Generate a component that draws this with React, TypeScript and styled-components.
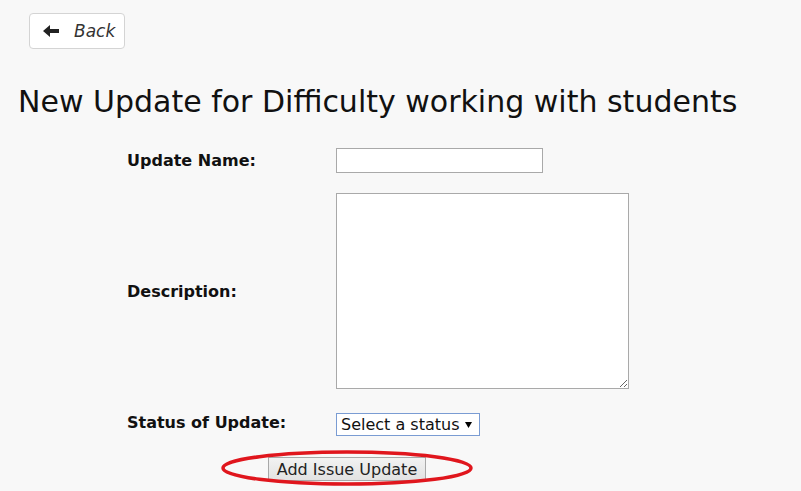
import React from 'react';
import styled, { createGlobalStyle } from 'styled-components';

const GlobalStyle = createGlobalStyle`
  html, body {
    margin: 0;
    padding: 0;
    background: #f8f8f8;
  }
  body {
    font-family: "DejaVu Sans", Verdana, sans-serif;
    color: #111;
  }
`;

const Page = styled.div`
  width: 801px;
  height: 491px;
  overflow: hidden;
  padding: 13px 0 0 0;
  box-sizing: border-box;
`;

const BackButton = styled.button`
  display: flex;
  align-items: center;
  gap: 15px;
  margin-left: 29px;
  width: 96px;
  height: 36px;
  padding: 0 0 0 13px;
  box-sizing: border-box;
  background: #fff;
  border: 1px solid #d4d4d4;
  border-radius: 4px;
  font-family: "DejaVu Sans", Verdana, sans-serif;
  font-style: italic;
  font-size: 17px;
  color: #333;
`;

const Title = styled.h1`
  margin: 36px 0 0 18px;
  font-size: 30px;
  font-weight: normal;
  line-height: 34px;
  color: #111;
`;

const Form = styled.form`
  display: grid;
  grid-template-columns: 209px auto;
  margin: 29px 0 0 127px;
  row-gap: 20px;
  align-items: center;
  justify-items: start;
`;

const Label = styled.label`
  font-weight: bold;
  font-size: 16px;
  color: #111;
`;

const TextInput = styled.input`
  width: 207px;
  height: 25px;
  box-sizing: border-box;
  border: 1px solid #a9a9a9;
  background: #fff;
  margin: 0;
`;

const TextArea = styled.textarea`
  width: 293px;
  height: 196px;
  box-sizing: border-box;
  border: 1px solid #a9a9a9;
  background: #fff;
  margin: 0;
  resize: both;
`;

const Select = styled.select`
  height: 23px;
  width: 144px;
  box-sizing: border-box;
  border: 1px solid #7a9cd3;
  background: #fff;
  font-family: "DejaVu Sans", Verdana, sans-serif;
  font-size: 16px;
  color: #111;
  padding: 0 0 0 4px;
  margin: 4px 0 0 0;
  appearance: none;
  background-image: url("data:image/svg+xml;utf8,<svg xmlns='http://www.w3.org/2000/svg' width='7' height='6'><path d='M0 0h7L3.5 6z' fill='black'/></svg>");
  background-repeat: no-repeat;
  background-position: right 7px center;
`;

const SubmitRow = styled.div`
  grid-column: 1 / span 2;
  position: relative;
  margin: 1px 0 0 141px;
  display: flex;
  align-items: center;
  justify-content: center;
  width: 158px;
`;

const SubmitButton = styled.button`
  height: 24px;
  width: 158px;
  box-sizing: border-box;
  padding: 0;
  background: linear-gradient(#f2f2f2, #e2e2e2);
  border: 1px solid #a8a8a8;
  font-family: "DejaVu Sans", Verdana, sans-serif;
  font-size: 16px;
  color: #222;
`;

const Highlight = styled.svg`
  position: absolute;
  left: -48px;
  top: -8px;
  pointer-events: none;
`;

const ArrowIcon = () => (
  <svg width="16" height="12" viewBox="0 0 16 12">
    <path d="M0 6 L7 0 V4 H16 V8 H7 V12 Z" fill="#222" />
  </svg>
);

export default function App() {
  return (
    <Page>
      <GlobalStyle />
      <BackButton type="button">
        <ArrowIcon />
        <span>Back</span>
      </BackButton>
      <Title>New Update for Difficulty working with students</Title>
      <Form onSubmit={(e) => e.preventDefault()}>
        <Label>Update Name:</Label>
        <TextInput type="text" />
        <Label>Description:</Label>
        <TextArea />
        <Label>Status of Update:</Label>
        <Select defaultValue="">
          <option value="">Select a status</option>
        </Select>
        <SubmitRow>
          <SubmitButton type="submit">Add Issue Update</SubmitButton>
          <Highlight width="254" height="40" viewBox="0 0 254 40">
            <ellipse cx="127" cy="19" rx="124" ry="16" fill="none" stroke="#e0161d" strokeWidth="3.5" />
          </Highlight>
        </SubmitRow>
      </Form>
    </Page>
  );
}
